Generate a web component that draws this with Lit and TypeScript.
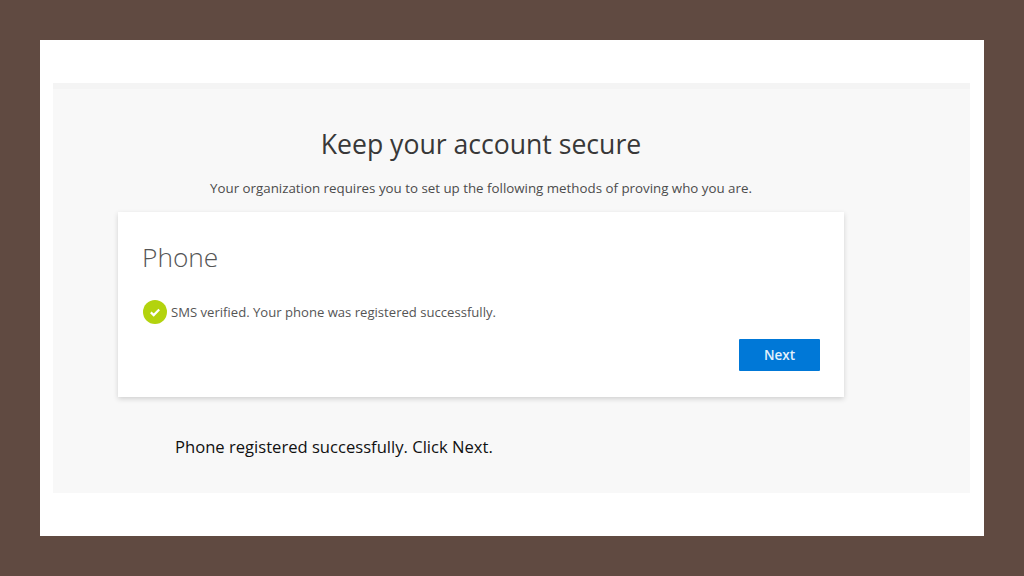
import { LitElement, html, css } from "lit";
import { customElement } from "lit/decorators.js";

@customElement("app-root")
export class AppRoot extends LitElement {
  static styles = css`
    :host {
      display: block;
      width: 1024px;
      height: 576px;
      background: #604a41;
      font-family: "Open Sans", "Noto Sans", sans-serif;
      overflow: hidden;
    }
    .slide {
      box-sizing: border-box;
      width: 944px;
      height: 496px;
      margin: 40px 0 0 40px;
      display: inline-block;
      vertical-align: top;
      background: #fff;
      padding: 43px 14px 43px 13px;
    }
    .panel {
      box-sizing: border-box;
      height: 410px;
      background: #f8f8f8;
      border-top: 6px solid #f4f4f4;
      padding: 0 126px 0 65px;
      display: flex;
      flex-direction: column;
    }
    h1 {
      margin: 36px 0 0;
      font-size: 26.6px;
      line-height: 38px;
      font-weight: 400;
      color: #383838;
      text-align: center;
    }
    .sub {
      margin: 15px 0 0;
      font-size: 13.32px;
      line-height: 20px;
      color: #4c4c4c;
      text-align: center;
    }
    .card {
      box-sizing: border-box;
      height: 185px;
      margin-top: 14px;
      background: #fff;
      box-shadow: 0 2px 5px rgba(0, 0, 0, 0.16);
      padding: 26px 24px 0 25px;
      display: flex;
      flex-direction: column;
    }
    h2 {
      margin: 0 0 0 -1px;
      font-size: 26.3px;
      line-height: 38px;
      font-weight: 300;
      color: #555;
    }
    .status {
      display: flex;
      align-items: center;
      gap: 4px;
      margin-top: 24px;
      font-size: 13.1px;
      color: #555;
    }
    .status svg {
      width: 24px;
      height: 24px;
      flex: none;
    }
    .actions {
      display: flex;
      justify-content: flex-end;
      margin-top: 15px;
    }
    button {
      width: 81px;
      height: 32px;
      border: none;
      border-radius: 1px;
      padding: 0;
      background: #0078d7;
      color: #e3f1fc;
      font: 600 13.5px "Open Sans", sans-serif;
    }
    .note {
      margin: 39px 0 0 57px;
      font-size: 16.6px;
      line-height: 22px;
      color: #111;
    }
  `;

  render() {
    return html`
      <div class="slide">
        <div class="panel">
          <h1>Keep your account secure</h1>
          <p class="sub">Your organization requires you to set up the following methods of proving who you are.</p>
          <div class="card">
            <h2>Phone</h2>
            <div class="status">
              <svg viewBox="0 0 24 24">
                <circle cx="12" cy="12" r="12" fill="#b3d30e"></circle>
                <path d="M7.8 12.4l2.9 2.7 5.5-5.6" fill="none" stroke="#fff" stroke-width="2.2"></path>
              </svg>
              <span>SMS verified. Your phone was registered successfully.</span>
            </div>
            <div class="actions"><button>Next</button></div>
          </div>
          <p class="note">Phone registered successfully. Click Next.</p>
        </div>
      </div>
    `;
  }
}
